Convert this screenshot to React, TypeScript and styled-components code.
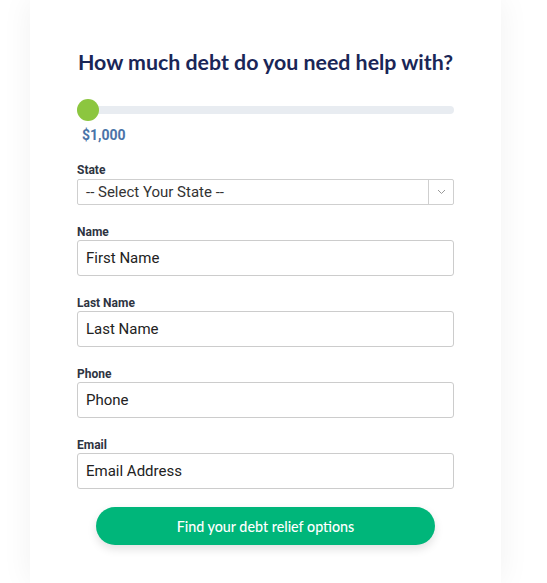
import styled, { createGlobalStyle } from "styled-components";

const GlobalStyle = createGlobalStyle`
  html, body {
    margin: 0;
    padding: 0;
    background: #ffffff;
  }
  * {
    box-sizing: border-box;
  }
`;

const Page = styled.div`
  width: 547px;
  height: 583px;
  overflow: hidden;
  padding-left: 30px;
`;

const Card = styled.div`
  width: 471px;
  min-height: 583px;
  background: #fff;
  box-shadow: 0 0 30px rgba(0, 0, 0, 0.06);
  padding: 48px 47px 0;
`;

const Heading = styled.h1`
  margin: 0;
  font-family: Lato, "Liberation Sans", sans-serif;
  font-weight: 700;
  font-size: 21.35px;
  line-height: 28px;
  color: #1a2657;
  text-align: center;
  white-space: nowrap;
`;

const Slider = styled.div`
  position: relative;
  margin-top: 23px;
  height: 22px;
  display: flex;
  align-items: center;
`;

const Track = styled.div`
  width: 100%;
  height: 8px;
  border-radius: 4px;
  background: #e8ecf1;
`;

const Thumb = styled.div`
  position: absolute;
  left: 0;
  top: 0;
  width: 22px;
  height: 22px;
  border-radius: 50%;
  background: #8cc63f;
`;

const Amount = styled.div`
  margin: 7px 0 0 5px;
  font-family: Roboto, "Liberation Sans", sans-serif;
  font-weight: 700;
  font-size: 14px;
  line-height: 14px;
  color: #4a74a8;
`;

const Field = styled.div<{ $top: number }>`
  display: flex;
  flex-direction: column;
  margin-top: ${(p) => p.$top}px;
`;

const Label = styled.label`
  font-family: Roboto, "Liberation Sans", sans-serif;
  font-weight: 700;
  font-size: 12px;
  line-height: 14px;
  color: #2e3441;
  margin-bottom: 1px;
`;

const SelectBox = styled.div`
  display: flex;
  height: 26px;
  margin-top: 1px;
  border: 1px solid #cfcfcf;
  border-radius: 2px;
`;

const SelectText = styled.div`
  flex: 1;
  display: flex;
  align-items: center;
  padding-left: 8px;
  font-family: Roboto, "Liberation Sans", sans-serif;
  font-size: 15px;
  color: #333;
  border-right: 1px solid #cfcfcf;
`;

const Caret = styled.div`
  width: 24px;
  display: flex;
  align-items: center;
  justify-content: center;
`;

const Input = styled.input`
  height: 36px;
  border: 1px solid #cccccc;
  border-radius: 3px;
  padding: 0 8px;
  font-family: Roboto, "Liberation Sans", sans-serif;
  font-size: 15px;
  color: #222;
  outline: none;

  &::placeholder {
    color: #222;
    opacity: 1;
  }
`;

const Submit = styled.button`
  display: block;
  margin: 18px auto 0;
  width: 339px;
  height: 38px;
  border: none;
  border-radius: 19px;
  background: #00b67a;
  color: #fff;
  font-family: Lato, "Liberation Sans", sans-serif;
  font-size: 14.3px;
  font-weight: 500;
  box-shadow: 0 4px 10px rgba(0, 0, 0, 0.12);
  cursor: pointer;
`;

const fields = [
  { label: "Name", placeholder: "First Name" },
  { label: "Last Name", placeholder: "Last Name" },
  { label: "Phone", placeholder: "Phone" },
  { label: "Email", placeholder: "Email Address" },
];

export default function App() {
  return (
    <>
      <GlobalStyle />
      <Page>
        <Card>
          <Heading>How much debt do you need help with?</Heading>
          <Slider>
            <Track />
            <Thumb />
          </Slider>
          <Amount>$1,000</Amount>
          <Field $top={21}>
            <Label>State</Label>
            <SelectBox>
              <SelectText>-- Select Your State --</SelectText>
              <Caret>
                <svg width="9" height="6" viewBox="0 0 9 6">
                  <path d="M1 1l3.5 3.5L8 1" fill="none" stroke="#999" strokeWidth="1" />
                </svg>
              </Caret>
            </SelectBox>
          </Field>
          {fields.map((f) => (
            <Field key={f.label} $top={20}>
              <Label>{f.label}</Label>
              <Input placeholder={f.placeholder} />
            </Field>
          ))}
          <Submit>Find your debt relief options</Submit>
        </Card>
      </Page>
    </>
  );
}
